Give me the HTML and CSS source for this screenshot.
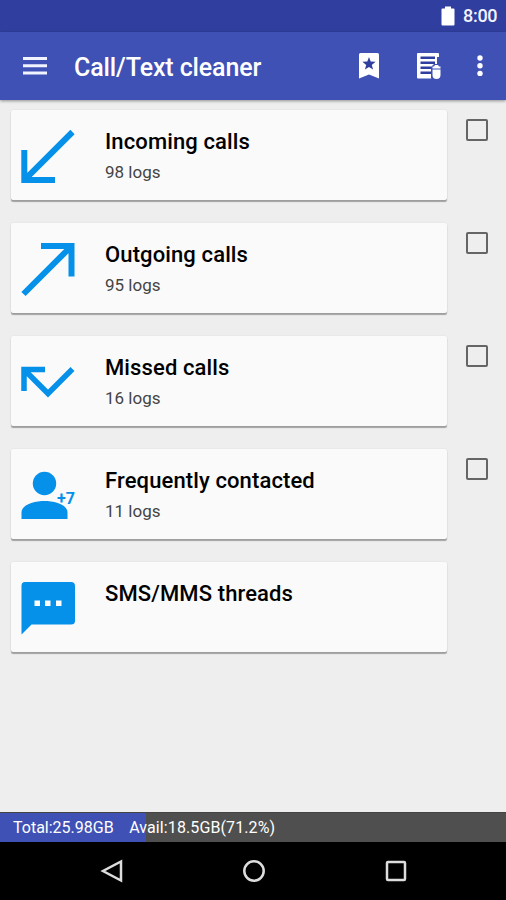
FILE: index.html
```html
<!DOCTYPE html>
<html lang="en">
<head>
<meta charset="utf-8">
<title>Call/Text cleaner</title>
<link rel="stylesheet" href="styles.css">
</head>
<body>
<div class="phone">
  <div class="status">
    <svg class="battery" width="14" height="20" viewBox="0 0 14 20"><path d="M1.500 2.500H4V.5h6v2h2.500q1 0 1 1v15q0 1-1 1h-11q-1 0-1-1v-15q0-1 1-1z"/></svg>
    <span class="clock">8:00</span>
  </div>
  <header class="bar">
    <svg class="menu" width="24" height="20" viewBox="0 0 24 20"><path d="M0 2.500h24M0 9.800h24M0 17h24"/></svg>
    <h1 class="title">Call/Text cleaner</h1>
    <svg class="bookmark" width="20" height="27" viewBox="0 0 20 27"><path class="white" d="M1.500 0h17q1.500 0 1.500 1.500V25.500L10 21.500 0 25.500V1.500Q0 0 1.500 0z"/><path class="navy" d="M10 4l1.700 4.600 4.900.2-3.800 3.100 1.300 4.700-4.100-2.700-4.100 2.700 1.300-4.700-3.800-3.100 4.900-.2z"/></svg>
    <svg class="log" width="25" height="27" viewBox="0 0 25 27"><path class="white" d="M2 0h20q1 0 1 1v24.500H2q-1 0-1-1V1q0-1 1-1z"/><path class="lines" d="M4.500 4.700h14.500M4.500 9.700h14.500M4.500 14.700h11M4.500 19.700h10.500"/><path class="navy" d="M21 4h2v8h-2zM15 14l3-3h7v16h-9l-1-2z"/><path class="white" d="M19 12h3l1 1.500h1.500v2h-8v-2H18zM16.500 16.500h8V22q0 4-4 4t-4-4z"/></svg>
    <svg class="more" width="6" height="22" viewBox="0 0 6 22"><circle cx="3" cy="3" r="2.700"/><circle cx="3" cy="10.700" r="2.700"/><circle cx="3" cy="18.400" r="2.700"/></svg>
  </header>
  <main class="list">
    <section class="row">
      <div class="card">
        <svg class="icon" width="94" height="90" viewBox="0 0 94 90"><path class="stroke" d="M13.300 40v30H44M14 69.300 61.500 22"/></svg>
        <div class="text"><h2 class="name">Incoming calls</h2><p class="count">98 logs</p></div>
      </div>
      <span class="check"></span>
    </section>
    <section class="row">
      <div class="card">
        <svg class="icon" width="94" height="90" viewBox="0 0 94 90"><path class="stroke" d="M30 23h30.500v30.500M60 23.500 12.500 71"/></svg>
        <div class="text"><h2 class="name">Outgoing calls</h2><p class="count">95 logs</p></div>
      </div>
      <span class="check"></span>
    </section>
    <section class="row">
      <div class="card">
        <svg class="icon" width="94" height="90" viewBox="0 0 94 90"><path class="stroke thin" d="M34 33.500H13V55M13.500 34 37 57.500 61.500 33"/></svg>
        <div class="text"><h2 class="name">Missed calls</h2><p class="count">16 logs</p></div>
      </div>
      <span class="check"></span>
    </section>
    <section class="row">
      <div class="card">
        <svg class="icon" width="94" height="90" viewBox="0 0 94 90"><circle class="blue" cx="33.500" cy="34.500" r="11.700"/><path class="blue" d="M10.500 70V63.500C10.500 55 25 52 33.500 52S56.500 55 56.500 63.500V70z"/><text class="plus" x="46" y="54.500" textLength="18" lengthAdjust="spacingAndGlyphs">+7</text></svg>
        <div class="text"><h2 class="name">Frequently contacted</h2><p class="count">11 logs</p></div>
      </div>
      <span class="check"></span>
    </section>
    <section class="row">
      <div class="card">
        <svg class="icon" width="94" height="90" viewBox="0 0 94 90"><path class="blue" d="M14 20h46q4 0 4 4v35q0 3.500-4 3.500H20.500L10.500 72.500V24q0-4 3.500-4z"/><path class="white" d="M23.500 38.500h5.500v5.500h-5.500zM34 38.500h5.500v5.500H34zM45 38.500h5.500v5.500H45z"/></svg>
        <div class="text"><h2 class="name">SMS/MMS threads</h2></div>
      </div>
    </section>
  </main>
  <footer class="storage"><span class="total">Total:25.98GB</span><span class="avail">Avail:18.5GB(71.2%)</span></footer>
  <nav class="nav">
    <svg width="24" height="26" viewBox="0 0 24 26"><path d="M21 3.500v19L3 13z"/></svg>
    <svg width="24" height="26" viewBox="0 0 24 26"><circle cx="12" cy="13" r="9.700"/></svg>
    <svg width="24" height="26" viewBox="0 0 24 26"><rect x="3" y="4" width="18" height="18" rx="1"/></svg>
  </nav>
</div>
</body>
</html>
```
FILE: styles.css
```css
* { box-sizing: border-box; }
body { margin: 0; font-family: Roboto, "Liberation Sans", sans-serif; }
h1, h2, p { margin: 0; white-space: nowrap; }
svg { display: block; flex: none; }
.phone { width: 506px; height: 900px; display: flex; flex-direction: column; background: #eee; overflow: hidden; }
.status { height: 32px; background: #303f9f; display: flex; justify-content: flex-end; align-items: center; padding: 0 9px 0 0; }
.battery { fill: #fff; margin-right: 8px; }
.clock { width: 34px; color: #f3f4ff; font-size: 18px; font-weight: 500; line-height: 22px; white-space: nowrap; letter-spacing: -0.300px; }
.bar { height: 68px; background: #3f51b5; display: flex; align-items: center; padding-left: 23px; box-shadow: 0 1px 3px rgba(0,0,0,.4); z-index: 1; }
.menu path { stroke: #f1f3ff; stroke-width: 3; }
.title { width: 284px; margin-left: 27px; margin-right: 1px; color: #fff; font-size: 25px; font-weight: 500; line-height: 32px; padding-top: 3px; letter-spacing: -0.120px; }
.log { margin-left: 37px; }
.more { margin-left: 36px; fill: #fff; }
.white { fill: #fff; }
.navy { fill: #303f9f; }
.log .navy { fill: #3f51b5; }
.lines { stroke: #303f9f; stroke-width: 2.500; }
.list { flex: 1; padding: 10px 0 0 11px; display: flex; flex-direction: column; gap: 23px; }
.row { display: flex; height: 90px; }
.card { width: 436px; height: 90px; display: flex; background: #fafafa; border-radius: 2px; box-shadow: 0 2px 1px rgba(0,0,0,.32), 0 0 2px rgba(0,0,0,.08); }
.text { padding-top: 18px; }
.name { font-size: 22px; line-height: 28px; font-weight: 500; color: #000; letter-spacing: .12px; }
.count { font-size: 17px; line-height: 22px; margin-top: 5px; color: #444; font-weight: 400; }
.check { width: 22px; height: 22px; margin: 9px 0 0 19px; border: 2px solid #656565; border-radius: 2px; }
.stroke { stroke: #0590e9; stroke-width: 6; fill: none; }
.thin { stroke-width: 5.500; }
.blue { fill: #0590e9; }
.plus { fill: #0590e9; font-size: 16px; font-weight: 700; }
.storage { height: 30px; display: flex; align-items: center; padding: 0 0 0 13px; gap: 15.500px; color: #fff; font-size: 16px; line-height: 20px; white-space: nowrap; border-top: 1px solid #444; background: linear-gradient(90deg, #3f51b5 146px, #4f4f4f 146px); }
.avail { letter-spacing: .1px; }
.nav { height: 58px; background: #000; display: flex; justify-content: center; gap: 118px; padding: 16px 0 0 1px; }
.nav svg { fill: none; stroke: #ddd; stroke-width: 2.500; }
```
